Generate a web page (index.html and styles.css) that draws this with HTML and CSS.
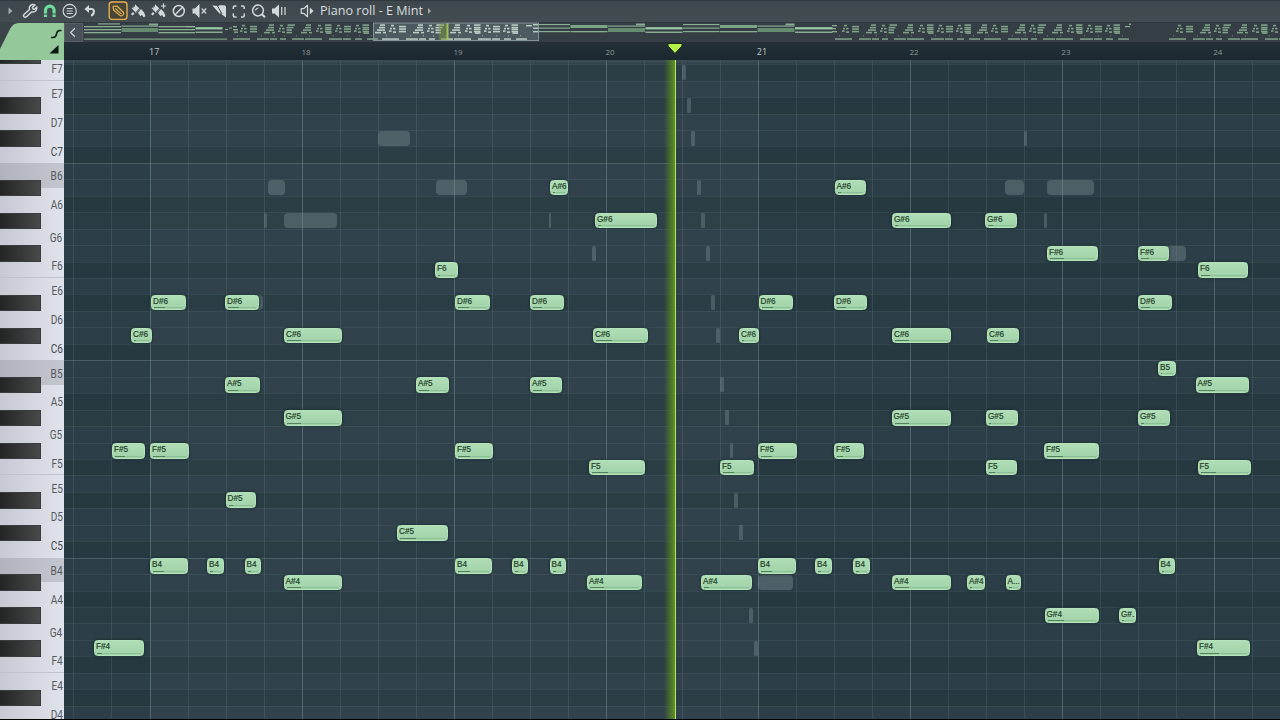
FILE: index.html
```html
<!DOCTYPE html>
<html lang="en">
<head>
<meta charset="utf-8">
<title>Piano roll - E Mint</title>
<link rel="stylesheet" href="styles.css">
</head>
<body>
<div class="app">
  <header class="toolbar">
    <svg class="icon" viewBox="0 0 20 20"><path class="dim" d="M8.500 7.500v7l4-3.500z"/></svg>
    <svg class="icon" viewBox="0 0 20 20"><path class="line" d="M4 14.500 9.500 9.500C8.500 6 11.500 3.500 15 5L12.500 7.300l.5 1.700 1.700.3L16.800 7c.7 3.500-2 5.500-5 4.700L6.500 16.700c-2 1.300-4-.5-2.500-2.200z"/></svg>
    <svg class="icon" viewBox="0 0 20 20"><path class="magnet" d="M5.500 17v-6.500a4.300 4.300 0 0 1 8.600 0V17"/><path class="notch" d="M3.500 14h4.400M12.100 14h4.400"/></svg>
    <svg class="icon" viewBox="0 0 20 20"><circle class="line thin" cx="9.700" cy="11" r="6.600"/><path class="line thin" d="M6.700 8.500h6M6.700 11h6M6.700 13.500h6"/></svg>
    <svg class="icon" viewBox="0 0 20 20"><path class="line bold" d="M7 9h4.500c3.500 0 3 5.500-.5 6.500"/><path class="fill" d="M4.500 9 9 5v8z"/></svg>
    <svg class="icon active" viewBox="0 0 20 20"><rect class="frame" x="1.200" y="2" width="17.800" height="17.500" rx="3"/><path class="pencil" d="M5 6.200 9 6l6.500 6.500c.8 1.600-1.100 4-3 3.300L5.500 10zM7.300 8.300l6.200 5.900"/></svg>
    <svg class="icon" viewBox="0 0 20 20"><path class="fill" d="M7 4.200 12 9l-4 4-4.500-5 1-.5.700 1.200.6-2.500 1 1z"/><path class="fill" d="m10 13 3-4 3 3.300 1.500 4-2 1-1.500-2.500-1.500 1.500z"/><path class="cut" d="m7.800 12.500 4.500-4.700"/><path class="fill" d="m3 14 2-2 1.500 1.800-2 1.700z"/></svg>
    <svg class="icon" viewBox="0 0 20 20"><path class="fill" d="M7 4.200 12 9l-4 4-4.500-5 1-.5.700 1.200.6-2.500 1 1z"/><path class="fill" d="m10 13 3-4 3 3.300 1.500 4-2 1-1.500-2.500-1.500 1.500z"/><path class="cut" d="m7.800 12.500 4.500-4.700"/><path class="fill" d="m3 14 2-2 1.500 1.800-2 1.700z"/><path class="line thin" d="M15.500 3.500v5M13 6h5"/></svg>
    <svg class="icon" viewBox="0 0 20 20"><circle class="line" cx="10.800" cy="11" r="5.500"/><path class="line" d="m7 14.700 7.600-7.400"/></svg>
    <svg class="icon" viewBox="0 0 20 20"><path class="fill" d="M4.500 8.500H7L11.500 4v14L7 13.500H4.500z"/><path class="line thin" d="m13.700 8.500 4.500 5M18.200 8.500l-4.500 5"/></svg>
    <svg class="icon" viewBox="0 0 20 20"><path class="fill" d="M4.300 5.500 12 6v8z"/><path class="fill" d="M11 5.300h5q2 0 2 2v10.200l-5.500-4z"/><path class="cut" d="m9 5 5 9"/></svg>
    <svg class="icon" viewBox="0 0 20 20"><path class="line" d="M5.300 9V7.500q0-1.500 1.500-1.500H8.500M13 6h1.700q1.500 0 1.500 1.500V9M16.200 13.500v2q0 1.500-1.500 1.500H13M8.500 17H6.800q-1.500 0-1.500-1.500v-2"/></svg>
    <svg class="icon" viewBox="0 0 20 20"><circle class="line" cx="10" cy="10.500" r="5.400"/><path class="line thin" d="M7.500 10.500q.5-2.500 3-2.500"/><path class="line bold" d="m13.800 14.300 3.200 3"/></svg>
    <svg class="icon" viewBox="0 0 20 20"><path class="fill" d="M4 8.500h2.500L11 4.500v13L6.500 13.500H4z"/><path class="line thin" d="M13.700 7v8M17 7v8"/></svg>
    <svg class="icon preview" viewBox="0 0 20 20"><path class="line thin" d="M5.200 8.700h2.500L11.500 5.300v11.400l-3.800-3.400H5.200z"/><path class="fill" d="m13.800 7.500 3.800 3.500-3.800 3.500z"/></svg>
    <h1 class="title">Piano roll - E Mint</h1>
    <svg class="icon more" viewBox="0 0 8 20"><path class="dim" d="M2 8v6l3-3z"/></svg>
  </header>
  <div class="body">
    <aside class="side">
      <svg class="corner" viewBox="0 0 64 38"><path class="tab" d="M0 27 10 7Q13 1 19 1H64V38H0z"/><path class="curve" d="M51 15.500h2q3 0 3.500-3.500t3.500-3.500h1.500"/><path class="ink" d="M49.500 31.500 58.500 23v8.500z"/></svg>
      <div class="keys" id="keys"></div>
    </aside>
    <main class="main">
      <div class="overview"><span class="back"><svg viewBox="0 0 18 18"><path class="line thin" d="m10.500 4.500-4.500 4.500 4.500 4.500"/></svg></span><svg class="map" id="map" viewBox="84 22 1196 20"></svg></div>
      <div class="ruler" id="ruler"></div>
      <div class="grid" id="grid"></div>
      <div class="glow"></div><div class="playline"></div>
      <svg class="marker" viewBox="0 0 16 13"><path d="M1 1.500h14v2.500L8 11.500 1 4z"/></svg>
    </main>
  </div>
</div>
<script src="script.js"></script>
</body>
</html>
```
FILE: styles.css
```css
* { box-sizing: border-box; }
body { margin: 0; background: #000; font-family: "Open Sans", "Noto Sans", sans-serif; }
.app { display: flex; flex-direction: column; width: 1280px; height: 719px; padding-top: 1px; overflow: hidden; background: #30393f; }
.toolbar { display: flex; align-items: flex-start; height: 21px; flex: none; background: linear-gradient(#3e474b, #434c50); }
.icon { width: 20px; height: 20px; flex: none; margin-top: -1px; }
.icon.active { margin-left: 8px; }
.icon.preview { margin-left: 8px; }
.icon.more { width: 8px; }
.title { margin: 0 2px 0 4px; font-size: 12.6px; line-height: 20px; font-weight: 400; color: #d8dee0; width: 104px; white-space: nowrap; }
.line { fill: none; stroke: #d2d9db; stroke-width: 1.5; stroke-linejoin: round; }
.thin { stroke-width: 1.2; }
.bold { stroke-width: 2.1; }
.fill { fill: #d2d9db; }
.dim { fill: #a2abaf; }
.cut { stroke: #40494d; stroke-width: 1; }
.magnet { fill: none; stroke: #6edc9c; stroke-width: 3.2; }
.notch { stroke: #40494d; stroke-width: 1; }
.frame { fill: #484437; stroke: #e5ae4a; stroke-width: 1.4; }
.pencil { fill: none; stroke: #efb94e; stroke-width: 1.1; stroke-linejoin: round; }
.body { display: flex; flex: 1; min-height: 0; }
.side { display: flex; flex-direction: column; width: 64px; flex: none; }
.corner { width: 64px; height: 38px; flex: none; background: #3b4549; }
.tab { fill: #94c79a; }
.curve { fill: none; stroke: #14201a; stroke-width: 1.7; }
.ink { fill: #101813; }
.keys { position: relative; flex: 1; overflow: hidden; background: linear-gradient(90deg, #c6c9d1, #d6d9e1 60%, #e0e3ec); }
.key { display: flex; align-items: center; justify-content: flex-end; padding: 2px 1.5px 0 0; font: 12.3px Roboto, sans-serif; color: #555961; }
.key:first-child { margin-top: -3.9px; }
.key span { transform: scaleX(.82); transform-origin: right; line-height: 14px; }
.short { height: 24.66px; }
.tall { height: 32.9px; }
.key:last-child { height: 22.5px; }
.key:last-child span { line-height: 12px; }
.key.b { background: rgba(120, 122, 130, .27); }
.key.f { border-bottom: 1px solid #bfc3cc; }
.key.c span { color: #44484f; }
.black { position: absolute; left: 0; width: 41px; height: 16.4px; background: linear-gradient(90deg, #232525, #393b3b 60%, #474a4a); border: 1px solid #3a3d3f; border-left: 0; }
.main { position: relative; display: flex; flex-direction: column; flex: 1; min-width: 0; }
.overview { display: flex; height: 20px; flex: none; background: #343e44; border-top: 1px solid #2f383d; }
.back { width: 19px; background: #485157; border: 1px solid #566066; }
.back svg { display: block; width: 17px; height: 17px; }
.map { width: 1196px; height: 20px; margin-left: 1px; margin-top: -1px; }
.ruler { position: relative; height: 18px; flex: none; background: linear-gradient(#253038, #1c282f); }
.bar { position: absolute; top: 4px; width: 24px; text-align: center; font: 8px/12px "Open Sans", sans-serif; color: #8d989e; }
.bar.strong { color: #c0c9cd; font-size: 9px; }
.grid { position: relative; flex: 1; overflow: hidden; background: #273941; }
.lanes { display: block; width: 1216px; height: 660px; }
.note { position: absolute; height: 15.4px; padding: 1px 0 0 1px; border: 1px solid #b4e2bb; border-radius: 3.5px; background: linear-gradient(#b0ddb5, #a0d2a8); box-shadow: 0 0 2px 1px rgba(18, 38, 38, .5); font: 8.2px/9px "Liberation Sans", sans-serif; color: #1f3f2a; -webkit-text-stroke: .2px #1f3f2a; white-space: nowrap; overflow: hidden; }
.note i { position: absolute; left: 2px; bottom: 1px; height: 1px; background: #55805c; }
.note::after { content: ""; position: absolute; left: 2px; right: 2px; bottom: 1px; height: 1px; background: rgba(80, 130, 90, .25); }
.ghost { position: absolute; height: 15px; border-radius: 4px; background: rgba(130, 146, 152, .38); }
.ghost.slim { border-radius: 1.5px; }
.glow { position: absolute; left: 600px; top: 38px; bottom: 0; width: 11px; background: linear-gradient(90deg, rgba(90, 140, 20, 0), rgba(86, 132, 31, .6) 50%, #5f9226); }
.playline { position: absolute; left: 611px; top: 38px; bottom: 0; width: 1px; background: #b4e66c; }
.marker { position: absolute; left: 603px; top: 20px; width: 16px; height: 13px; }
.marker path { fill: #b4f04a; stroke: #1c2a12; stroke-width: 1; }
```
FILE: script.js
```js
const ROW = 16.448;
const TOP = 162.9;
const SCALE = ['B', 'A#', 'A', 'G#', 'G', 'F#', 'F', 'E', 'D#', 'D', 'C#', 'C'];

// Vertical position of a pitch such as "G#5", measured from the window top
function rowTop(pitch) {
  const octave = Number(pitch.slice(-1));
  return TOP + ((6 - octave) * 12 + SCALE.indexOf(pitch.slice(0, -1))) * ROW;
}

// Keyboard
const keys = document.getElementById('keys');
const whites = ['F7', 'E7', 'D7', 'C7'];
for (const octave of [6, 5]) for (const n of 'BAGFEDC') whites.push(n + octave);
for (const n of 'BAGFED') whites.push(n + 4);
keys.innerHTML = whites.map(k => {
  const n = k[0].toLowerCase();
  return `<div class="key ${n} ${'dag'.includes(n) ? 'tall' : 'short'}"><span>${k}</span></div>`;
}).join('');
for (let octave = 7; octave >= 4; octave--) {
  for (const n of ['A#', 'G#', 'F#', 'D#', 'C#']) {
    const y = rowTop(n + octave) - 60 + 0.3;
    if (y > -17 && y < 653) keys.insertAdjacentHTML('beforeend', `<div class="black" style="top:${y}px"></div>`);
  }
}

// Ruler
document.getElementById('ruler').innerHTML = [17, 18, 19, 20, 21, 22, 23, 24].map((b, i) =>
  `<div class="bar${i % 4 ? '' : ' strong'}" style="left:${(i * 151.95 + 78.2).toFixed(1)}px">${b}</div>`).join('');

// Lanes and grid lines
let s = '<svg class="lanes" viewBox="64 60 1216 660">';
for (let i = -7; i < 35; i++) {
  const y = Math.round(TOP + i * ROW);
  const h = Math.round(TOP + (i + 1) * ROW) - y;
  const n = SCALE[(i + 12) % 12];
  const fill = ['A', 'F', 'C', 'D#'].includes(n) ? '#263840' : n === 'G#' ? '#293b43' : '#2c3e47';
  s += `<rect x="64" y="${y}" width="1216" height="${h}" fill="${fill}"/>`;
}
s += '<rect x="150" y="60" width="608" height="660" fill="#7a8c98" opacity=".065"/>';
for (let i = -7; i < 35; i++) {
  const y = Math.round(TOP + i * ROW) + 0.5;
  s += `<path d="M64 ${y}H1280" stroke="#7c979d" stroke-opacity="${i % 12 === 0 ? 0.36 : 0.13}"/>`;
}
for (let i = -2; i < 30; i++) {
  const x = Math.round(149.5 + i * 38.01) + 0.5;
  s += `<path d="M${x} 60V720" stroke="#86a0a5" stroke-opacity="${i % 4 === 0 ? 0.42 : 0.18}"/>`;
}
s += '<rect x="64" y="60" width="1216" height="3" fill="#405158" opacity=".5"/></svg>';

// Ghost notes: left, width, pitch
const ghosts = [
  [378, 32, 'C#7'], [268, 17, 'A#6'], [284, 53, 'G#6'], [264, 3, 'G#6'], [436, 31, 'A#6'],
  [549, 2, 'G#6'], [592, 4, 'F#6'], [250, 13, 'D#6'], [1024, 3, 'C#7'], [1005, 19, 'A#6'],
  [1047, 47, 'A#6'], [1044, 3, 'G#6'], [1160, 26, 'F#6'], [758, 35, 'A#4'],
  [682, 4, 'F7'], [687, 4, 'D#7'], [691, 4, 'C#7'], [696.5, 4, 'A#6'], [701, 4, 'G#6'],
  [706, 4, 'F#6'], [710.5, 4, 'D#6'], [715.5, 4, 'C#6'], [719.5, 4, 'A#5'], [725, 4, 'G#5'],
  [730, 3, 'F#5'], [734, 4, 'D#5'], [739, 4, 'C#5'], [749, 4, 'G#4'], [754, 4, 'F#4']
];
// Notes: left, right, pitch, velocity line length, shortened label
const notes = [
  [94, 144, 'F#4', 5], [112, 145, 'F#5', 10], [131, 152.500, 'C#6', 2], [151, 186, 'D#6', 11], [150, 189, 'F#5', 12], [150, 188, 'B4', 11],
  [207, 224, 'B4', 3], [244.500, 261, 'B4', 3], [225, 259.500, 'D#6', 11], [225, 260, 'A#5', 10], [225.500, 256.500, 'D#5', 4],
  [284, 342.500, 'C#6', 14], [283.500, 342, 'G#5', 14], [283.500, 342.500, 'A#4', 14],
  [435, 458, 'F6', 2], [416, 449.500, 'A#5', 10], [397, 448, 'C#5', 16], [455, 490, 'D#6', 11], [455, 493.500, 'F#5', 12], [455, 492, 'B4', 12],
  [511.500, 528, 'B4', 3], [549.500, 566, 'B4', 3], [550, 568.500, 'A#6', 2], [530, 564, 'D#6', 9], [530, 562.500, 'A#5', 9],
  [595, 657.500, 'G#6', 3], [593, 648.500, 'C#6', 16], [589, 645, 'F5', 16], [587, 642.500, 'A#4', 14],
  [701, 752.500, 'A#4', 5], [720, 754, 'F5', 11], [739, 759, 'C#6', 2], [758.500, 793.500, 'D#6', 11], [758, 797, 'F#5', 11], [758, 796.500, 'B4', 11],
  [815, 832.500, 'B4', 3], [853, 870, 'B4', 3], [834.500, 866, 'A#6', 3], [834, 867.500, 'D#6', 9], [834, 864.500, 'F#5', 6],
  [892, 951.500, 'G#6', 3], [892, 951.500, 'C#6', 14], [891.500, 951, 'G#5', 14], [892, 951, 'A#4', 14],
  [985, 1017, 'G#6', 5], [987, 1019.500, 'C#6', 8], [986, 1018, 'G#5', 2], [986, 1017, 'F5', 6], [967, 985, 'A#4', 2], [1005.500, 1021.500, 'A#4', 3, 'A...'],
  [1047, 1098, 'F#6', 14], [1044, 1099.500, 'F#5', 16], [1044.500, 1099.500, 'G#4', 16], [1119, 1136.500, 'G#4', 2, 'G#..'],
  [1138, 1169.500, 'F#6', 8], [1138, 1172.500, 'D#6', 9], [1138, 1170.500, 'G#5', 3], [1158, 1176.500, 'B5', 1], [1158.500, 1175, 'B4', 2],
  [1198, 1248.500, 'F6', 9], [1195.500, 1249, 'A#5', 16], [1197.500, 1251, 'F5', 15], [1197, 1250.500, 'F#4', 19]
];
for (const [x, w, p] of ghosts) {
  s += `<div class="ghost${w < 6 ? ' slim' : ''}" style="left:${x - 64}px;top:${rowTop(p) - 59.3}px;width:${w}px"></div>`;
}
for (const [x, r, p, v, label] of notes) {
  s += `<div class="note" style="left:${x - 64}px;top:${rowTop(p) - 59.4}px;width:${r - x - 0.5}px">${label || p}<i style="width:${v}px"></i></div>`;
}
document.getElementById('grid').innerHTML = s;

// Overview map
let m = '';
const rect = (x, y, w, h, fill = '#93b89b', o = 0.9) => { m += `<rect x="${x}" y="${y}" width="${w}" height="${h}" fill="${fill}" opacity="${o}"/>`; };
function chord(x, w, kind) {
  if (kind === 1) { rect(x, 28, w, 4, '#6c9574'); rect(x, 25.500, w, 1.2); rect(x + w - 9, 23.500, 9, 1.8); }
  if (kind === 2) { rect(x, 27.200, w, 2.200, '#a8ddb2'); rect(x, 31.500, w, 1.5); }
  if (kind === 3) { rect(x, 24, w, 1.2); rect(x, 27.500, w, 1.2); rect(x, 31, w, 1.2); }
  if (kind === 4) { rect(x, 25, w, 3, '#83b08c'); rect(x, 31, w, 1.3); }
  if (kind === 5) { rect(x, 26, w, 1.3); rect(x, 29, w, 1.3); rect(x, 32, w, 1.3); }
}
[[84, 37, 5], [121.500, 36.500, 1], [158.500, 36.500, 5], [195.500, 27, 2], [538, 32, 3], [570.500, 37, 4], [608, 37, 1], [645.500, 37, 2],
 [683, 36.500, 3], [720, 37, 4], [757.500, 37, 1], [795, 37.500, 2]].forEach(c => chord(...c));
rect(98, 23.300, 22, 1.2); rect(186, 26, 9, 1.2);
rect(84, 38.500, 143, 1.3, '#7ba382');

const shapes = {
  stairs: [[0, 9, 6], [2, 6.5, 8], [5, 1.5, 5], [4, 4, 6], [8, 9, 3]],
  dots: [[0, 7.5, 2.500], [2, 2, 3], [4, 5, 2.500], [4, 8.5, 3], [1, 5, 2]],
  bars: [[0, 3, 7], [0, 5.500, 7], [0, 8, 7]],
  wedge: [[1, 1.500, 7.500], [0, 4, 7], [0, 6.500, 5.500], [0, 9, 5.500]],
  block: [[0, 1.500, 6.5], [0, 4, 6.500], [0, 5.800, 6.5], [0, 8, 6.500], [1, 9.500, 5.5]]
};
const phrase = [[0, 'stairs'], [14, 'dots'], [24, 'bars'], [38, 'stairs'], [52, 'dots'], [60.500, 'wedge'],
  [75, 'stairs'], [90, 'dots'], [99, 'block'], [109, 'dots'], [118, 'bars'], [128, 'dots'], [136.500, 'block']];
function play(start, from, to, fill) {
  for (const [dx, name] of phrase) {
    const x = start + dx;
    if (x < from || x > to) continue;
    for (const [a, b, w] of shapes[name]) rect(x + a, 22.800 + b, w, 1.6, fill);
  }
  for (const [dx, w] of [[7, 17], [31, 12], [44, 7], [54, 6], [66, 12], [79, 17], [103, 13], [117, 8], [129, 7], [141, 11]]) {
    if (start + dx >= from && start + dx < to) { rect(start + dx, 38.300, w, 1.5, fill); rect(start + dx + 4, 35.300, 1, 1, fill, 0.7); }
  }
}
rect(373.5, 23, 165, 17, '#66777e', 0.5);
play(226, 232, 371, '#88ad90');
rect(225, 29, 3, 1); rect(229, 27.500, 3, 1); rect(233, 26, 4, 1.4); rect(233, 29, 5, 1.4); rect(234, 31.5, 4, 1.4);
play(375, 375, 526, '#c6dacf');
play(828, 832, 978, '#88ad90');
play(977, 976, 1128, '#88ad90');
play(1162, 1169, 1280, '#88ad90');
rect(832, 25, 5, 1.3); rect(832, 28, 4, 1.3); rect(832, 31, 5, 1.3);
rect(526, 25, 6, 1.4, '#c6dacf'); rect(533, 24, 5, 1.4, '#c6dacf'); rect(533, 27.5, 5, 1.4, '#c6dacf'); rect(533, 31, 5, 1.4, '#c6dacf');
rect(1125, 26, 5, 1.2); rect(1129, 23.500, 2, 1.5);
rect(439, 24, 8, 16, '#779438', 0.5);
rect(446.500, 23, 2, 17, '#a9c958', 0.9);
m += '<rect x="373.5" y="23" width="165" height="17.500" fill="none" stroke="#84959a"/>';
document.getElementById('map').innerHTML = m;
```
